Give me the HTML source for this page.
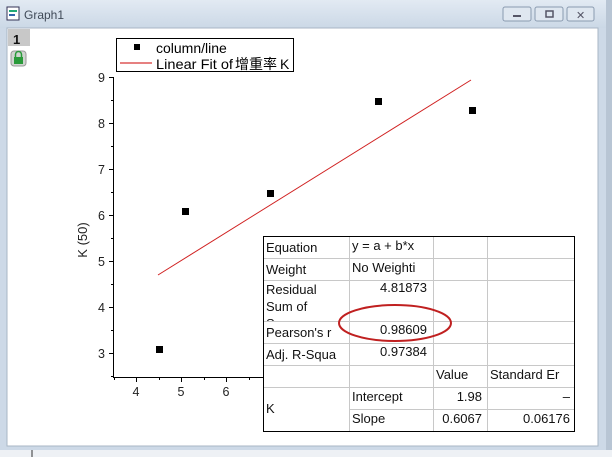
<!DOCTYPE html>
<html><head><meta charset="utf-8"><style>
html,body{margin:0;padding:0;width:612px;height:457px;overflow:hidden;background:#cfdbe8}
svg text{font-family:"Liberation Sans","Noto Sans CJK SC",sans-serif}
</style></head><body>
<svg width="612" height="457" xmlns="http://www.w3.org/2000/svg">
<defs>
<linearGradient id="tb" x1="0" y1="0" x2="0" y2="1"><stop offset="0" stop-color="#e2eaf3"/><stop offset="1" stop-color="#cbd8e6"/></linearGradient>
<clipPath id="c3"><rect x="263" y="280" width="86" height="41"/></clipPath>
</defs>
<rect x="0" y="0" width="612" height="457" fill="#cdd9e7"/>
<rect x="0" y="0" width="612" height="28" fill="url(#tb)"/>
<rect x="7" y="7" width="12" height="13" fill="#fff" stroke="#335"/>
<rect x="9" y="10" width="8" height="2" fill="#2a7"/><rect x="9" y="14" width="6" height="2" fill="#36a"/>
<text x="24" y="19" font-size="12" fill="#404a58">Graph1</text>
<g fill="#dfe7f0" stroke="#8a9bb0"><rect x="503" y="7" width="28" height="14" rx="2"/><rect x="535" y="7" width="28" height="14" rx="2"/><rect x="567" y="7" width="27" height="14" rx="2"/></g>
<rect x="513" y="15" width="8" height="2" fill="#556"/>
<rect x="546" y="11" width="7" height="6" fill="none" stroke="#556" stroke-width="1.5"/>
<text x="576" y="19" font-size="11" fill="#556">✕</text>
<rect x="606" y="0" width="6" height="457" fill="#b8c5d4"/>
<rect x="7" y="28" width="591" height="418" fill="#fff" stroke="#a8b6c6"/>
<rect x="8" y="29" width="22" height="17" fill="#c8c8c8"/>
<text x="13" y="44" font-size="13" font-weight="bold" fill="#111">1</text>
<rect x="11" y="51" width="15" height="15" rx="3" fill="#d0d4d0" stroke="#999"/>
<rect x="14" y="57" width="9" height="7" fill="#2a9a3a"/><path d="M15.5 57v-2.5a3 3 0 0 1 6 0V57" fill="none" stroke="#2a9a3a" stroke-width="1.5"/>
<rect x="0" y="450" width="612" height="7" fill="#eef1f5"/>
<line x1="32" y1="450" x2="32" y2="457" stroke="#333"/>

<!-- legend -->
<rect x="116.5" y="38.5" width="177" height="33" fill="#fff" stroke="#000"/>
<rect x="134" y="44" width="6" height="6" fill="#000"/>
<text x="156" y="53" font-size="14" fill="#000">column/line</text>
<line x1="120" y1="63" x2="152" y2="63" stroke="#c00" stroke-width="1"/>
<text x="156" y="69" font-size="14" fill="#000"><tspan textLength="77" lengthAdjust="spacingAndGlyphs">Linear Fit of</tspan><tspan x="235" font-size="14" textLength="42" lengthAdjust="spacingAndGlyphs">增重率</tspan><tspan x="280">K</tspan></text>

<!-- axes -->
<g stroke="#000" stroke-width="1">
<line x1="113.5" y1="77" x2="113.5" y2="378"/>
<line x1="113" y1="377.5" x2="563" y2="377.5"/>
<line x1="109" y1="77.5" x2="113" y2="77.5"/><line x1="109" y1="123.5" x2="113" y2="123.5"/><line x1="109" y1="169.5" x2="113" y2="169.5"/><line x1="109" y1="215.5" x2="113" y2="215.5"/><line x1="109" y1="261.5" x2="113" y2="261.5"/><line x1="109" y1="307.5" x2="113" y2="307.5"/><line x1="109" y1="353.5" x2="113" y2="353.5"/>
<line x1="111" y1="100.5" x2="113" y2="100.5"/><line x1="111" y1="146.5" x2="113" y2="146.5"/><line x1="111" y1="192.5" x2="113" y2="192.5"/><line x1="111" y1="238.5" x2="113" y2="238.5"/><line x1="111" y1="284.5" x2="113" y2="284.5"/><line x1="111" y1="330.5" x2="113" y2="330.5"/><line x1="111" y1="376.5" x2="113" y2="376.5"/>
<line x1="136.5" y1="377" x2="136.5" y2="382"/><line x1="181.5" y1="377" x2="181.5" y2="382"/><line x1="226.5" y1="377" x2="226.5" y2="382"/>
<line x1="114.5" y1="377" x2="114.5" y2="380"/><line x1="159.5" y1="377" x2="159.5" y2="380"/><line x1="204.5" y1="377" x2="204.5" y2="380"/><line x1="249.5" y1="377" x2="249.5" y2="380"/>
</g>
<g font-size="12.5" fill="#222" text-anchor="end">
<text x="105" y="82">9</text><text x="105" y="128">8</text><text x="105" y="174">7</text><text x="105" y="220">6</text><text x="105" y="266">5</text><text x="105" y="312">4</text><text x="105" y="358">3</text>
</g>
<g font-size="12.5" fill="#222" text-anchor="middle">
<text x="136" y="396">4</text><text x="181" y="396">5</text><text x="226" y="396">6</text>
</g>
<text transform="translate(87,240) rotate(-90)" font-size="13" fill="#222" text-anchor="middle">K (50)</text>

<!-- data -->
<line x1="158" y1="275" x2="471" y2="80" stroke="#d02020" stroke-width="1"/>
<g fill="#000">
<rect x="156" y="346" width="7" height="7"/><rect x="182" y="208" width="7" height="7"/><rect x="267" y="190" width="7" height="7"/><rect x="375" y="98" width="7" height="7"/><rect x="469" y="107" width="7" height="7"/>
</g>

<!-- table -->
<rect x="263" y="236" width="311" height="195" fill="#fff"/>
<g stroke="#c8c8c8" stroke-width="1">
<line x1="263" y1="258.5" x2="574" y2="258.5"/><line x1="263" y1="280.5" x2="574" y2="280.5"/><line x1="263" y1="321.5" x2="574" y2="321.5"/><line x1="263" y1="343.5" x2="574" y2="343.5"/><line x1="263" y1="365.5" x2="574" y2="365.5"/><line x1="263" y1="387.5" x2="574" y2="387.5"/><line x1="349" y1="409.5" x2="574" y2="409.5"/>
<line x1="349.5" y1="236" x2="349.5" y2="431"/><line x1="433.5" y1="236" x2="433.5" y2="431"/><line x1="487.5" y1="236" x2="487.5" y2="431"/>
</g>
<rect x="263.5" y="236.5" width="311" height="195" fill="none" stroke="#000"/>
<g font-size="13" fill="#111">
<text x="266" y="252">Equation</text>
<text x="352" y="250">y = a + b*x</text>
<text x="266" y="274">Weight</text>
<text x="352" y="272">No Weighti</text>
<text x="266" y="294">Residual</text>
<text x="266" y="311">Sum of</text>
<text x="266" y="328" clip-path="url(#c3)">Squares</text>
<text x="266" y="337">Pearson's r</text>
<text x="266" y="359">Adj. R-Squa</text>
<text x="266" y="413">K</text>
<text x="352" y="401">Intercept</text>
<text x="352" y="423">Slope</text>
<text x="436" y="379">Value</text>
<text x="490" y="379">Standard Er</text>
</g>
<g font-size="13" fill="#111" text-anchor="end">
<text x="427" y="292">4.81873</text>
<text x="427" y="334">0.98609</text>
<text x="427" y="356">0.97384</text>
<text x="482" y="401">1.98</text>
<text x="482" y="423">0.6067</text>
<text x="570" y="401">–</text>
<text x="570" y="423">0.06176</text>
</g>
<ellipse cx="395" cy="323" rx="56" ry="18" fill="none" stroke="#c02020" stroke-width="2"/>
</svg>
</body></html>
